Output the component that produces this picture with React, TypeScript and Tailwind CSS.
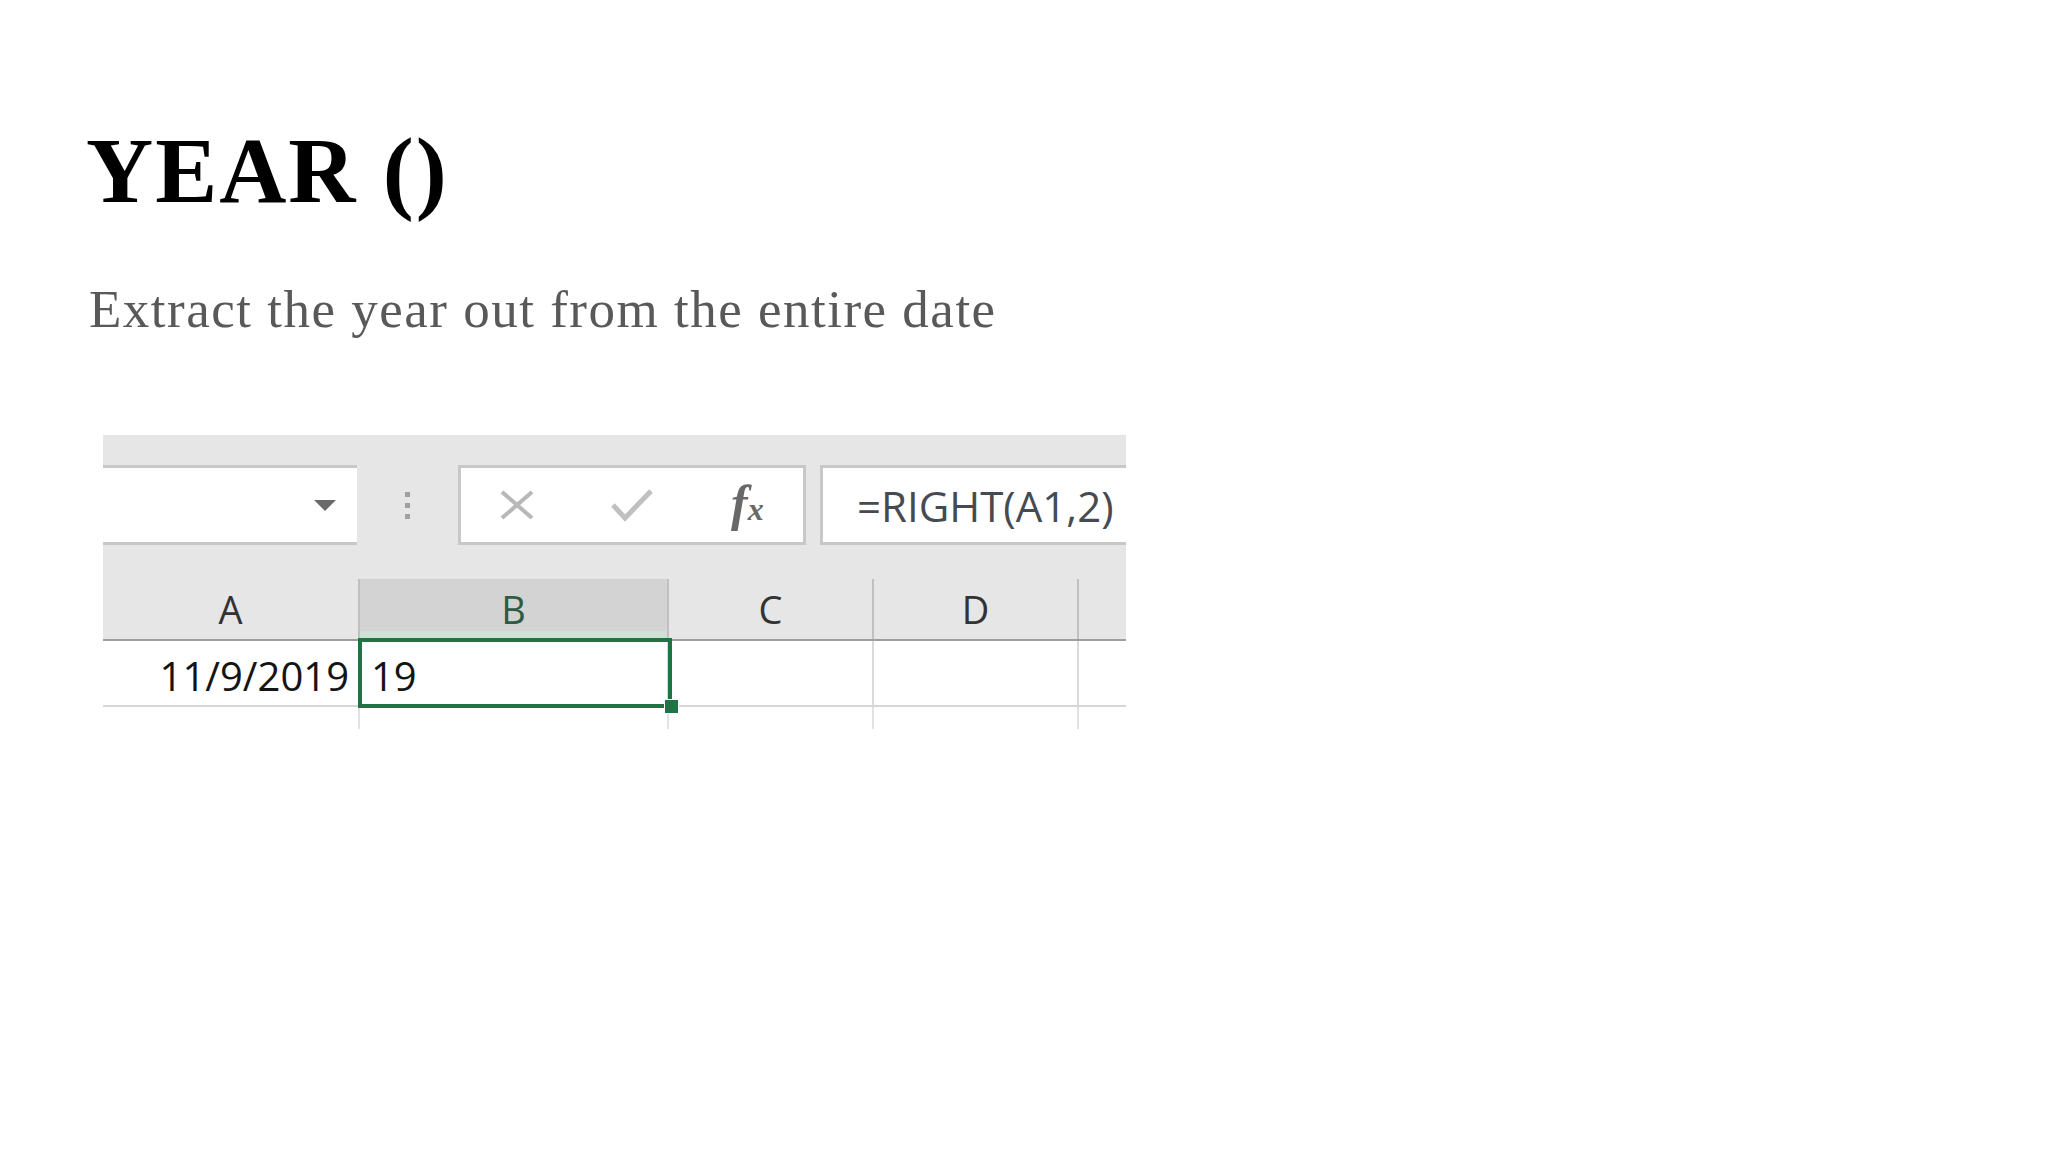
import React from "react";

function XIcon() {
  return (
    <svg width="38" height="30" viewBox="0 0 38 30">
      <path d="M4 2 L34 28 M34 2 L4 28" stroke="#b8b8b8" strokeWidth="4" fill="none" />
    </svg>
  );
}

function CheckIcon() {
  return (
    <svg width="44" height="34" viewBox="0 0 44 34">
      <path d="M3 17 L15 30 L41 3" stroke="#c0c0c0" strokeWidth="5" fill="none" />
    </svg>
  );
}

export default function App() {
  const cols = [
    { l: "A", w: "w-[257px]" },
    { l: "B", w: "w-[309px]" },
    { l: "C", w: "w-[205px]" },
    { l: "D", w: "w-[205px]" },
    { l: "", w: "w-[47px]" },
  ];
  return (
    <div className="w-[2048px] h-[1152px] bg-white overflow-hidden">
      <div className="pl-[86px] pt-[125px] flex flex-col items-start">
        <h1 className="font-['Liberation_Serif',serif] font-bold text-[93px] leading-[92px] text-black tracking-[2px]">
          YEAR ()
        </h1>
        <p className="mt-[66px] ml-[3px] font-['Liberation_Serif',serif] text-[53px] leading-[53px] text-[#595959] tracking-[1.5px]">
          Extract the year out from the entire date
        </p>
        <div className="ml-[17px] mt-[99px] w-[1023px] relative bg-[#e6e6e6] font-['Open_Sans',sans-serif]">
          <div className="pt-[30px] flex h-[110px]">
            <div className="w-[254px] bg-white border-y-[3px] border-[#c8c8c8] flex items-center justify-end pr-[21px]">
              <div className="w-0 h-0 border-l-[11px] border-r-[11px] border-t-[11px] border-l-transparent border-r-transparent border-t-[#6a6a6a]" />
            </div>
            <div className="w-[101px] flex flex-col items-center justify-center gap-[6px]">
              <div className="w-[5px] h-[5px] bg-[#a0a0a0]" />
              <div className="w-[5px] h-[5px] bg-[#a0a0a0]" />
              <div className="w-[5px] h-[5px] bg-[#a0a0a0]" />
            </div>
            <div className="w-[348px] bg-white border-[3px] border-[#c8c8c8] flex items-center">
              <div className="w-[112px] flex justify-center">
                <XIcon />
              </div>
              <div className="w-[120px] flex justify-center">
                <CheckIcon />
              </div>
              <div className="w-[112px] flex justify-center items-baseline font-['Liberation_Serif',serif] italic font-bold text-[#686868] -mt-[4px]">
                <span className="text-[50px] leading-none">f</span>
                <span className="text-[32px] leading-none">x</span>
              </div>
            </div>
            <div className="w-[14px]" />
            <div className="flex-1 bg-white border-y-[3px] border-l-[3px] border-[#c8c8c8] flex items-center pl-[34px] text-[42px] text-[#464b52]">
              =RIGHT(A1,2)
            </div>
          </div>
          <div className="mt-[34px] flex h-[62px] border-b-[2px] border-[#9e9e9e]">
            {cols.map((c, i) => (
              <div
                key={i}
                className={`${c.w} flex items-center justify-center text-[38px] pt-[1px] ${
                  i === 1 ? "bg-[#d3d3d3] text-[#2e5c43] shadow-[inset_0_-8px_0_#cde2d5]" : "text-[#333]"
                } ${i < 4 ? "border-r-[2px] border-r-[#c0c0c0]" : ""}`}
              >
                {c.l}
              </div>
            ))}
          </div>
          <div className="flex h-[66px] bg-white border-b-[2px] border-[#d6d6d6]">
            {cols.map((c, i) => (
              <div
                key={i}
                className={`${c.w} flex items-center text-[40px] text-[#141414] font-medium pt-[6px] ${
                  i === 0 ? "justify-end pr-[9px]" : "pl-[11px]"
                } ${i < 4 ? "border-r-[2px] border-r-[#dadada]" : ""}`}
              >
                {i === 0 ? "11/9/2019" : i === 1 ? "19" : ""}
              </div>
            ))}
          </div>
          <div className="flex h-[22px] bg-white">
            {cols.map((c, i) => (
              <div key={i} className={`${c.w} ${i < 4 ? "border-r-[2px] border-r-[#e2e2e2]" : ""}`} />
            ))}
          </div>
          <div className="absolute left-[255px] top-[203px] w-[314px] h-[70px] border-[4px] border-[#217346]" />
          <div className="absolute left-[561px] top-[264px] w-[15px] h-[15px] bg-[#217346] border-[1px] border-white" />
        </div>
      </div>
    </div>
  );
}
